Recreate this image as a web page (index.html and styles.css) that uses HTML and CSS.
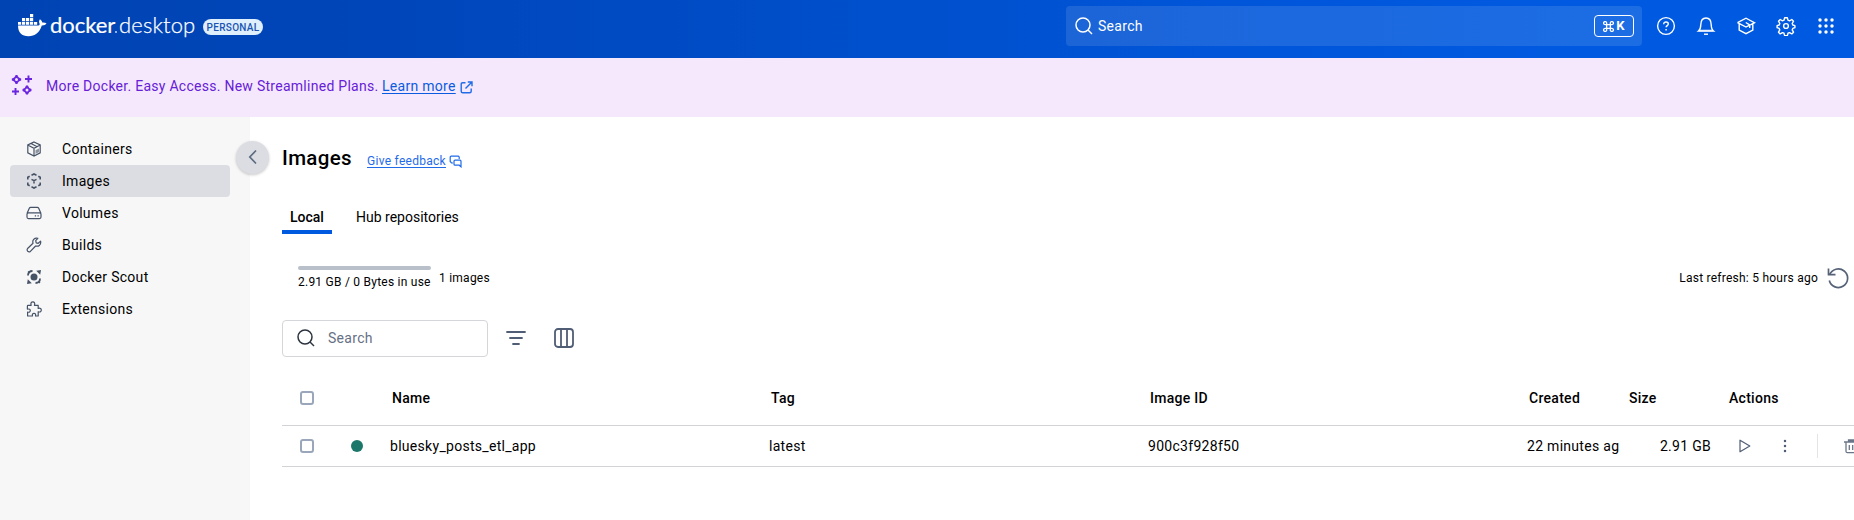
FILE: index.html
```html
<!DOCTYPE html>
<html lang="en">
<head>
<meta charset="utf-8">
<title>Docker Desktop</title>
<link rel="stylesheet" href="styles.css">
</head>
<body>
<header class="topbar">
  <div class="brand">
    <svg class="whale" width="29" height="23" viewBox="0 0 29 23" fill="#fff"><path d="M0 11.5h19.600c1.300 0 2-.5 2.100-1.500-.9-1.600-.9-3.300.2-4.800 1.500.9 2.200 2 2.300 3.300 1.600-.2 3.100 0 4.300.8-.9 1.600-2.500 2.300-4.700 2.200C21.500 18.500 17 22.300 10.500 22.300 3.800 22.300 0 18.600 0 11.500z"/><path d="M0 8h3.200v2.800H0zM4 8h3.200v2.800H4zM8 8h3.200v2.800H8zM12 8h3.200v2.800H12zM16 8h3.200v2.800H16zM4 4h3.200v3.200H4zM8 4h3.200v3.200H8zM12 4h3.200v3.200H12zM12 0h3.200v3.200H12z"/></svg>
    <span class="word docker">docker</span><span class="dot"></span><span class="word desktop">desktop</span>
    <span class="plan">PERSONAL</span>
  </div>
  <div class="global-search">
    <svg width="18" height="18" viewBox="0 0 18 18" fill="none" stroke="#fff" stroke-width="1.5"><circle cx="8" cy="8" r="7"/><path d="M13 13l4 4"/></svg>
    <span class="global-label">Search</span>
    <span class="kbd"><svg width="11" height="11" viewBox="0 0 12 12" fill="none" stroke="#fff" stroke-width="1.4"><path d="M4 4h4v4H4zM4 4H2.600A1.700 1.700 0 1 1 4 2.600zM8 4V2.600A1.700 1.700 0 1 1 9.400 4zM8 8h1.400A1.700 1.700 0 1 1 8 9.400zM4 8v1.400A1.700 1.700 0 1 1 2.600 8z"/></svg>K</span>
  </div>
  <nav class="tools">
    <svg viewBox="0 0 20 20"><circle cx="10" cy="10" r="8.400"/><path d="M7.700 8.200c0-1.400 1-2.200 2.300-2.200s2.300.8 2.300 2c0 1.500-2.200 1.700-2.200 3.300"/><path d="M10.100 13v1.500"/></svg>
    <svg viewBox="0 0 20 20"><path d="M2.500 15c1.700-1.300 2.200-3.200 2.300-6.300C4.900 4.500 6.700 2 10 2s5.100 2.500 5.200 6.700c.1 3.100.6 5 2.300 6.300z"/><path d="M3 14.500h14" stroke-width="1.800" opacity=".6"/><path d="M8 18.200h4"/></svg>
    <svg viewBox="0 0 20 20"><path d="M1.500 6.700L10 2.200l8.500 4.500-4 2.200M1.500 6.700L10 11l3.700-2M3.200 8v6l6.800 3.600 6.800-3.600V7.800M13.700 12V8.800L9.800 6.500"/></svg>
    <svg viewBox="0 0 20 20"><circle cx="10" cy="10" r="2.400"/><path d="M8.700 1.700h2.600l.7 2.500 1.500.6 2.300-1.300 1.700 1.700-1.300 2.300.6 1.500 2.100.7v2l-2.100.7-.6 1.500 1.300 2.300-1.700 1.700-2.300-1.300-1.500.6-.7 2.500H8.700L8 17.200l-1.500-.6-2.300 1.300-1.700-1.700 1.300-2.300-.6-1.500-2.100-.7v-2l2.100-.7.600-1.500-1.300-2.300 1.700-1.700 2.300 1.300L8 4.200z" stroke-linejoin="round"/></svg>
    <svg viewBox="0 0 20 20"><g fill="#fff" stroke="none"><circle cx="4" cy="4" r="1.700"/><circle cx="10" cy="4" r="1.700"/><circle cx="16" cy="4" r="1.700"/><circle cx="4" cy="10" r="1.700"/><circle cx="10" cy="10" r="1.700"/><circle cx="16" cy="10" r="1.700"/><circle cx="4" cy="16" r="1.700"/><circle cx="10" cy="16" r="1.700"/><circle cx="16" cy="16" r="1.700"/></g></svg>
  </nav>
</header>

<div class="banner">
  <svg width="22" height="22" viewBox="0 0 22 22" fill="none" stroke="#6a25de" stroke-width="1.900"><path d="M5.500 1.200Q6.200 4.800 10 5.500Q6.200 6.200 5.500 9.800Q4.800 6.200 1 5.500Q4.800 4.800 5.500 1.200z" fill="#6a25de"/><path d="M16 11.800Q16.700 15.300 20.300 16Q16.700 16.700 16 20.200Q15.300 16.700 11.700 16Q15.300 15.300 16 11.800z" fill="#6a25de"/><circle cx="5.500" cy="5.500" r="1.500" fill="#f5e8fc" stroke="none"/><circle cx="16" cy="16" r="1.500" fill="#f5e8fc" stroke="none"/><path d="M17.500 1.500v7M14 5h7M4.500 14v7M1 17.500h7"/></svg>
  <span class="banner-text">More Docker. Easy Access. New Streamlined Plans.</span>
  <a class="learn">Learn more</a>
  <svg class="ext" width="13" height="13" viewBox="0 0 13 13" fill="none" stroke="#1f6be8" stroke-width="1.400"><path d="M5.500 1.700H2.700q-1.500 0-1.500 1.500v7q0 1.500 1.500 1.500h7q1.500 0 1.500-1.500V7.500M5.500 7.500l6.200-6.300M7.800 1h4.200v4.200"/></svg>
</div>

<div class="body">
  <aside class="sidebar">
    <a class="item"><svg viewBox="0 0 16 16"><path d="M8 1l6.200 3v7.800L8 15l-6.200-3.200V4zM1.800 4L8 7.200 14.200 4M8 7.200V15M5 2.500l6.200 3.200"/><path d="M9.500 9.300l3.500-1.800v3.600l-3.500 1.800z" fill="#465367" stroke="none" opacity=".6"/></svg>Containers</a>
    <a class="item active"><svg viewBox="0 0 16 16"><path d="M5.500 2.300L8 1l2.500 1.300M12.300 3.200l1.900 1v2.300M14.200 9.500v2.300l-1.900 1M10.500 13.800L8 15l-2.500-1.200M3.700 12.800l-1.900-1V9.500M1.800 6.500V4.200l1.900-1" stroke-width="1.600"/><path d="M5.500 6.300L8 7.600l2.500-1.300M8 7.600v2.800" stroke-width="1.500"/></svg>Images</a>
    <a class="item"><svg viewBox="0 0 16 16"><path d="M1 8.500L3.300 3.300Q3.700 2.400 4.700 2.400h6.600q1 0 1.400.9L15 8.500M2.500 7.800h11q1.500 0 1.500 1.500v2.800q0 1.500-1.500 1.500h-11Q1 13.600 1 12.100V9.300q0-1.500 1.500-1.500z"/><path d="M8.800 10.800h1.300M11.500 10.800h1.300"/></svg>Volumes</a>
    <a class="item"><svg viewBox="0 0 16 16"><path d="M11.800 1.300Q9.300.7 7.700 2.400 6.300 4 7 6.300L1.600 11.500q-1 1.500.1 2.700 1.300 1.200 2.700.2l5.200-5.400q2.300.7 4-.8 1.600-1.700 1-4.100l-2.400 2.200-2-.4-.5-2.200z" stroke-linejoin="round"/></svg>Builds</a>
    <a class="item"><svg viewBox="0 0 16 16"><circle cx="8" cy="8" r="3.500" fill="#465367" stroke="none"/><path d="M2 6.500Q2 2 6.500 2M14 9.500Q14 14 9.500 14" stroke-width="1.800"/><path d="M10.200 1.800L15 1l-.8 4.800zM1 15l.8-4.800 4 4z" fill="#465367" stroke="none"/><path d="M2 2.500l1.500 1.500M12.500 12.500l1.500 1.500"/></svg>Docker Scout</a>
    <a class="item"><svg viewBox="0 0 16 16"><path d="M2 4.300h3.200C4.300 2.300 5.300.9 6.800.9s2.500 1.400 1.600 3.400h3.800v3.200c2-.8 3.100.3 3.100 1.600s-1.100 2.400-3.100 1.600V15H9.500c.5-1.700-.2-2.700-1.500-2.700s-2 1-1.500 2.700H1.600v-3.900c1.800.5 2.700-.3 2.700-1.500S3.400 7.600 1.400 8.200V5q0-.7.6-.7z" stroke-linejoin="round"/></svg>Extensions</a>
    <button class="collapse"><svg width="10" height="16" viewBox="0 0 10 16" fill="none" stroke="#5c6b80" stroke-width="1.700"><path d="M8 1.500L1.800 8 8 14.500"/></svg></button>
  </aside>

  <main class="main">
    <div class="heading">
      <h1>Images</h1>
      <a class="feedback">Give feedback</a>
      <svg width="13" height="13" viewBox="0 0 13 13" fill="none" stroke="#1f6be8" stroke-width="1.200"><path d="M4 8H2.500L1.200 6.500V2.200q0-1 1-1h7q1 0 1 1V4"/><path d="M6 5.200h5q1 0 1 1v5.600L10.200 10.200H6q-1 0-1-1v-3q0-1 1-1z"/></svg>
    </div>
    <div class="tabs"><a class="tab selected">Local</a><a class="tab">Hub repositories</a></div>
    <div class="status">
      <div class="usage"><div class="meter"></div><div class="usage-text">2.91 GB / 0 Bytes in use</div></div>
      <span class="count">1 images</span>
      <span class="refresh">Last refresh: 5 hours ago</span>
      <svg width="22" height="22" viewBox="0 0 22 22" fill="none" stroke="#566277" stroke-width="1.700"><path d="M2.600 8A9.300 9.300 0 1 1 2.300 13.500M1.500 1.500v6.200h7"/></svg>
    </div>
    <div class="filters">
      <div class="search">
        <svg width="18" height="18" viewBox="0 0 18 18" fill="none" stroke="#2c3440" stroke-width="1.500"><circle cx="8" cy="8" r="7"/><path d="M13 13l4 4"/></svg>
        <span>Search</span>
      </div>
      <svg class="funnel" width="20" height="20" viewBox="0 0 20 20" fill="none" stroke="#4f5d75" stroke-width="1.800" stroke-linecap="round"><path d="M1 4h18M4 10h12M7 16h6"/></svg>
      <svg class="columns" width="20" height="20" viewBox="0 0 20 20" fill="none" stroke="#4f5d75" stroke-width="1.800"><rect x="1" y="1" width="18" height="18" rx="3"/><path d="M7 1v18M13 1v18"/></svg>
    </div>
    <div class="table">
      <div class="row head">
        <i class="box"></i><span></span><span>Name</span><span>Tag</span><span>Image ID</span><span>Created</span><span>Size</span><span>Actions</span>
      </div>
      <div class="row data">
        <i class="box"></i><i class="used"></i><span>bluesky_posts_etl_app</span><span>latest</span><span>900c3f928f50</span><span>22 minutes ag</span><span class="size">2.91 GB</span>
        <div class="actions">
          <svg width="12" height="14" viewBox="0 0 12 14" fill="none" stroke="#4f5d75" stroke-width="1.200" stroke-linejoin="round"><path d="M1 1.200L10.800 7 1 12.800z"/></svg>
          <svg class="more" width="4" height="14" viewBox="0 0 4 14" fill="#4f5d75"><circle cx="2" cy="2" r="1.250"/><circle cx="2" cy="7" r="1.250"/><circle cx="2" cy="12" r="1.250"/></svg>
          <i class="divider"></i>
          <svg class="trash" width="14" height="15" viewBox="0 0 14 15" fill="none" stroke="#6a7688" stroke-width="1.300"><path d="M0 3h14M4.500 2.500V1h5v1.500M2 3.500v8.700q0 1.500 1.500 1.500h7q1.500 0 1.500-1.500V3.500M5.300 6v5M8.700 6v5"/><path d="M4 1h6v2H4z" fill="#6a7688" stroke="none"/></svg>
        </div>
      </div>
    </div>
  </main>
</div>
</body>
</html>
```

FILE: styles.css
```css
* { box-sizing: border-box; }
body {
  margin: 0;
  width: 1854px;
  height: 520px;
  overflow: hidden;
  background: #fff;
  color: #000;
  font: 14px/20px Roboto, sans-serif;
  letter-spacing: 0.29px;
}
svg { display: block; flex: none; }

.topbar {
  display: flex;
  height: 58px;
  padding-top: 6px;
  background: linear-gradient(90deg, #0044b4 0%, #0045b8 18%, #0055d8 65%, #005ae1 85%, #005ae1 100%);
  color: #fff;
}
.brand { display: flex; align-items: flex-start; width: 1066px; padding-left: 18px; }
.whale { margin-top: 8px; }
.word { font: 22px/30px Lato, sans-serif; margin-top: 4px; }
.docker { margin-left: 3px; width: 66px; letter-spacing: -0.05px; -webkit-text-stroke: 0.2px #fff; }
.dot { width: 2px; height: 2px; margin: 25px 1px 0 -1px; background: #8fb2e5; }
.desktop { width: 78px; margin-left: 1px; letter-spacing: 0.15px; font-weight: 300; -webkit-text-stroke: 0.25px #fff; }
.plan {
  margin: 13px 0 0 6px;
  width: 60px;
  height: 16px;
  border-radius: 8px;
  background: #dfeffb;
  color: #1a55b4;
  font: 500 10px/17px Roboto, sans-serif;
  letter-spacing: 0.3px;
  text-align: center;
}
.global-search {
  display: flex;
  align-items: center;
  width: 576px;
  height: 40px;
  padding: 0 8px 0 9px;
  border-radius: 4px;
  background: rgba(255, 255, 255, 0.11);
}
.global-label { margin-left: 5px; flex: 1; }
.kbd {
  display: flex;
  align-items: center;
  justify-content: center;
  gap: 2px;
  width: 40px;
  height: 22px;
  border: 1px solid #fff;
  border-radius: 4px;
  font-size: 13px;
  font-weight: 700;
}
.tools { display: flex; align-items: center; gap: 20px; height: 40px; margin-left: 14px; }
.tools svg { width: 20px; height: 20px; fill: none; stroke: #fff; stroke-width: 1.4; }

.banner { display: flex; height: 59px; padding: 16px 0 0 11px; background: #f5e8fc; color: #6620d8; }
.banner-text { margin: 2px 0 0 13px; width: 336px; height: 20px; white-space: nowrap; letter-spacing: 0.27px; }
.learn { margin-top: 2px; width: 73px; height: 20px; white-space: nowrap; color: #0a5be0; text-decoration: underline; text-underline-offset: 2px; }
.ext { margin: 7px 0 0 5px; }

.body { display: flex; height: 403px; }
.sidebar { position: relative; width: 250px; padding: 16px 20px 0 10px; background: #f7f7f8; }
.item { display: flex; align-items: center; height: 32px; padding-left: 16px; border-radius: 4px; }
.item svg { width: 16px; height: 16px; margin-right: 20px; fill: none; stroke: #465367; stroke-width: 1.2; }
.active { background: #dcdde2; }
.collapse {
  position: absolute;
  top: 24px;
  right: -19px;
  display: flex;
  align-items: center;
  justify-content: center;
  width: 33px;
  height: 33px;
  padding: 0 0 1px;
  border: 0;
  border-radius: 50%;
  background: #dcdde2;
  box-shadow: 0 1px 3px rgba(0, 0, 0, 0.22);
}

.main { width: 1604px; padding: 28px 0 0 32px; overflow: hidden; }
.heading { display: flex; align-items: baseline; height: 30px; }
h1 { margin: 0; width: 85px; font-size: 20.5px; line-height: 26px; font-weight: 500; letter-spacing: 0.35px; }
.feedback { margin-right: 3px; width: 79px; white-space: nowrap; color: #1f6be8; font-size: 12px; letter-spacing: 0.28px; text-decoration: underline; text-underline-offset: 2px; }
.heading svg { align-self: flex-start; margin-top: 10px; }
.tabs { display: flex; gap: 16px; height: 34px; margin-top: 25px; }
.tab { height: 34px; padding: 7px 8px 0; letter-spacing: 0; }
.selected { width: 50px; border-bottom: 4px solid #005ae0; font-weight: 500; }
.status { display: flex; height: 30px; margin-top: 27px; padding: 5px 5px 0 16px; font-size: 12px; line-height: 16px; letter-spacing: 0.24px; }
.usage { width: 133px; white-space: nowrap; }
.meter { height: 4px; border-radius: 2px; background: #b9c0ca; }
.usage-text { margin-top: 4px; }
.count { margin: 4px 0 0 8px; flex: 1; }
.refresh { margin: 4px 9px 0 0; }
.status svg { margin-top: 1px; }

.filters { display: flex; align-items: center; height: 37px; margin-top: 29px; }
.search { display: flex; align-items: center; width: 206px; height: 37px; padding: 0 0 1px 14px; border: 1px solid #d5d6d9; border-radius: 4px; color: #667085; }
.search span { margin-left: 13px; }
.funnel { margin: 0 28px 2px 18px; }
.columns { margin-bottom: 1px; }

.table { width: 1574px; margin-top: 15px; }
.row {
  display: grid;
  grid-template-columns: 51px 41px 379px 379px 379px 100px 100px 127px;
  align-items: center;
  padding-left: 18px;
  border-bottom: 1px solid #d2d3d6;
}
.head { height: 54px; padding-bottom: 2px; font-weight: 500; }
.data { height: 41px; }
.data > span { margin-left: -2px; white-space: nowrap; }
.data > .size { margin-right: 18px; text-align: right; }
.box { width: 14px; height: 14px; border: 2px solid #9aa7ba; border-radius: 3px; }
.used { width: 12px; height: 12px; border-radius: 50%; background: #1c776b; }
.actions { display: flex; align-items: center; padding-left: 10px; }
.more { margin-left: 32px; }
.divider { flex: none; width: 1px; height: 24px; margin-left: 30px; background: #e3e4e7; }
.trash { margin-left: 26px; }
```
